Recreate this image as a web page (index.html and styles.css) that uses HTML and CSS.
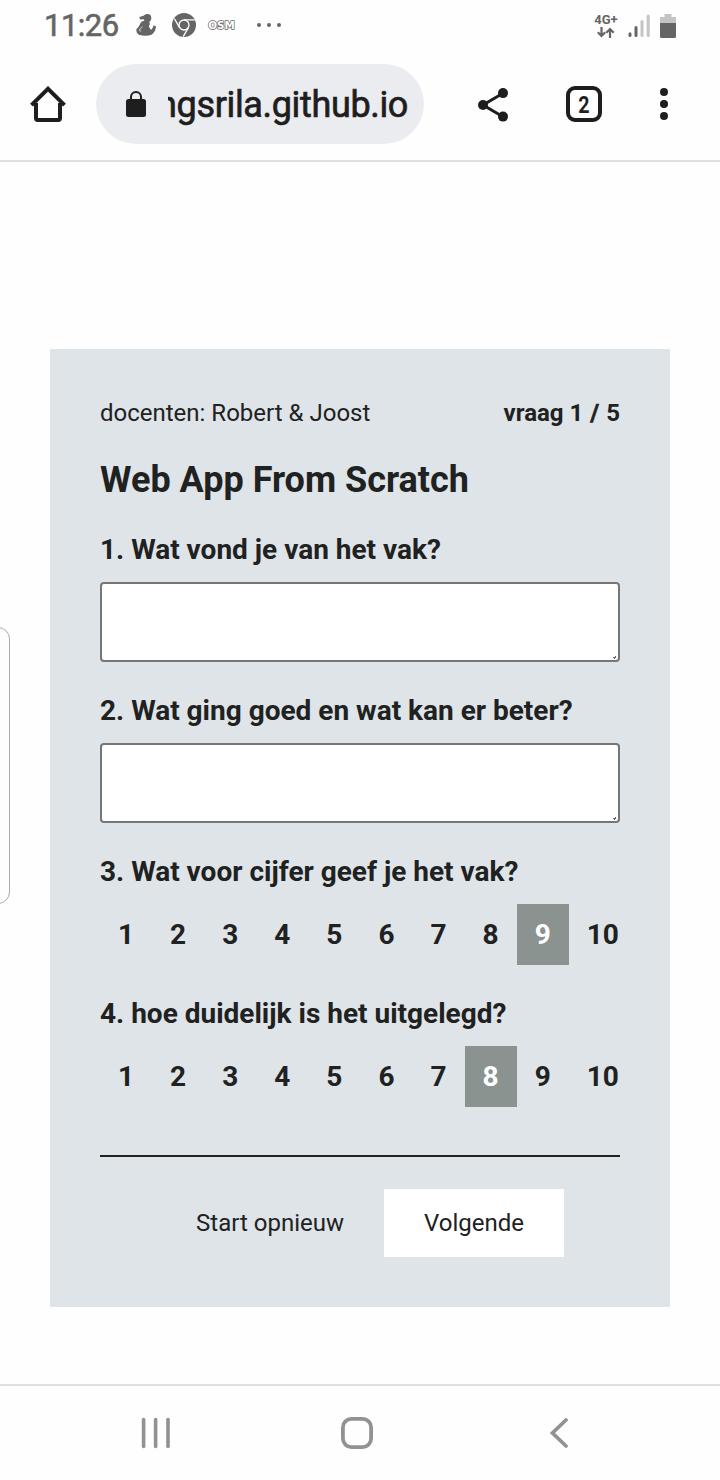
FILE: index.html
```html
<!DOCTYPE html>
<html lang="nl">
<head>
<meta charset="utf-8">
<title>Web App From Scratch</title>
<link rel="stylesheet" href="styles.css">
</head>
<body>
<div class="screen">
  <header class="status">
    <div class="status-left">
      <span class="clock">11:26</span>
      <svg class="ic-figure" width="20" height="24" viewBox="0 0 20 24" fill="#656565"><circle cx="11.4" cy="5" r="3.9"/><path d="M10.5 1.8 3.4 4 4 6.6 9 6Z"/><path d="M7.5 8H13.2L13.8 11 12.8 13.5 15 17Q17 15.5 17.5 12.6L20 13.3Q19.6 18.8 16 21.4Q10 24 2.8 21.8L.8 19.8 .2 16.6Q3 13.8 4.6 10Q5.5 8.2 7.5 8Z"/><path d="M6.4 13.4 3.2 17.2 5.2 18.4" fill="none" stroke="#fefefe" stroke-width=".7"/></svg>
      <svg class="ic-chrome" width="24" height="24" viewBox="0 0 24 24"><circle cx="12" cy="12" r="12" fill="#656565"/><circle cx="12" cy="12" r="5" fill="none" stroke="#fefefe" stroke-width="1.3"/><path d="M12 6.8H22.8M7.6 14.6 2.3 5.5M16.4 14.6 11.2 23.6" fill="none" stroke="#fefefe" stroke-width="1.3"/></svg>
      <svg class="ic-osm" width="30" height="14" viewBox="0 0 30 14"><text x="1.3" y="11.3" textLength="26.5" lengthAdjust="spacingAndGlyphs">OSM</text></svg>
      <svg class="ic-more" width="26" height="6" viewBox="0 0 26 6" fill="#656565"><circle cx="3" cy="3" r="2"/><circle cx="13" cy="3" r="2"/><circle cx="23" cy="3" r="2"/></svg>
    </div>
    <div class="status-right">
      <div class="network"><span class="net-label">4G+</span>
        <svg width="18" height="11" viewBox="0 0 18 11" fill="none" stroke="#656565" stroke-width="2.2"><path d="M4.5 0V9M.8 5.3 4.5 9 8.2 5.3M13 11V2M9.3 5.7 13 2 16.7 5.7"/></svg>
      </div>
      <svg class="ic-signal" width="22" height="24" viewBox="0 0 22 24" stroke-width="3" stroke-linecap="round"><path d="M2 19.7V21.5M8 13.5V21.5" stroke="#656565"/><path d="M14 7.5V21.5M20.2 2V21.5" stroke="#c4c4c4"/></svg>
      <svg class="ic-battery" width="16" height="24" viewBox="0 0 16 24"><path d="M4.5 0H11.5V3H16V9H0V3H4.5Z" fill="#c4c4c4"/><path d="M0 9H16V22.5Q16 24 14.5 24H1.5Q0 24 0 22.5Z" fill="#656565"/></svg>
    </div>
  </header>
  <div class="toolbar">
    <svg class="ic-home" width="36" height="36" viewBox="0 0 36 36" fill="none" stroke="#1e1e1f" stroke-width="4" stroke-linejoin="round"><path d="M6 17V32.3Q6 34 7.7 34H28.3Q30 34 30 32.3V17"/><path d="M1.5 19.2 18 2.8 34.5 19.2" stroke-linejoin="miter"/></svg>
    <div class="address">
      <svg width="20" height="26" viewBox="0 0 20 26"><rect y="8" width="20" height="18" rx="2.5" fill="#1e1e1f"/><path d="M5 9V6A5 5 0 0 1 15 6V9" fill="none" stroke="#1e1e1f" stroke-width="2"/></svg>
      <div class="url"><span>ngsrila.github.io</span></div>
    </div>
    <svg class="ic-share" width="30" height="34" viewBox="0 0 30 34" fill="#1e1e1f"><path d="M25 5.3 5 17 25 28.7" fill="none" stroke="#1e1e1f" stroke-width="3"/><circle cx="25" cy="5.1" r="5"/><circle cx="5" cy="17" r="5"/><circle cx="25" cy="28.6" r="5"/></svg>
    <div class="tabs"><span>2</span></div>
    <svg class="ic-menu" width="8" height="32" viewBox="0 0 8 32" fill="#1e1e1f"><circle cx="4" cy="4" r="4"/><circle cx="4" cy="16" r="4"/><circle cx="4" cy="28" r="4"/></svg>
  </div>
  <main class="page">
    <div class="edge-panel"></div>
    <form class="card">
      <div class="meta"><span>docenten: Robert &amp; Joost</span><b>vraag 1 <span class="slash">/</span> 5</b></div>
      <h1>Web App From Scratch</h1>
      <section>
        <h2>1. Wat vond je van het vak?</h2>
        <div class="area"><svg width="3" height="3" viewBox="0 0 3 3"><path d="M0 1H2V0H3V2H2V3H1V2H0Z" fill="#666"/></svg></div>
      </section>
      <section>
        <h2>2. Wat ging goed en wat kan er beter?</h2>
        <div class="area"><svg width="3" height="3" viewBox="0 0 3 3"><path d="M0 1H2V0H3V2H2V3H1V2H0Z" fill="#666"/></svg></div>
      </section>
      <section>
        <h2>3. Wat voor cijfer geef je het vak?</h2>
        <div class="scale"><span>1</span><span>2</span><span>3</span><span>4</span><span>5</span><span>6</span><span>7</span><span>8</span><span class="on">9</span><span>10</span></div>
      </section>
      <section>
        <h2>4. hoe duidelijk is het uitgelegd?</h2>
        <div class="scale"><span>1</span><span>2</span><span>3</span><span>4</span><span>5</span><span>6</span><span>7</span><span class="on">8</span><span>9</span><span>10</span></div>
      </section>
      <div class="actions"><span class="btn">Start opnieuw</span><span class="btn primary">Volgende</span></div>
    </form>
  </main>
  <nav class="navbar">
    <svg class="ic-recent" width="30" height="32" viewBox="0 0 30 32" fill="#929292"><rect x=".8" y=".8" width="3.6" height="30.4" rx="1.8"/><rect x="12.8" y=".8" width="3.6" height="30.4" rx="1.8"/><rect x="25.2" y=".8" width="3.6" height="30.4" rx="1.8"/></svg>
    <svg class="ic-square" width="32" height="32" viewBox="0 0 32 32" fill="none" stroke="#929292" stroke-width="3.8"><rect x="1.9" y="1.9" width="28.2" height="28.2" rx="8.5"/></svg>
    <svg class="ic-back" width="18" height="30" viewBox="0 0 18 30" fill="none" stroke="#929292" stroke-width="3.7" stroke-linecap="round"><path d="M16 2 2.5 15 16 28"/></svg>
  </nav>
</div>
</body>
</html>
```

FILE: styles.css
```css
body { margin: 0; font-family: Roboto, sans-serif; color: #202121; background: #fefefe; }
svg { display: block; flex: none; }
.screen { width: 720px; height: 1480px; display: flex; flex-direction: column; overflow: hidden; }
.status { height: 50px; display: flex; justify-content: space-between; align-items: center; padding: 0 44px; box-sizing: border-box; color: #656565; }
.status-left, .status-right { display: flex; align-items: center; }
.clock { font-size: 31px; line-height: 36px; width: 92px; padding-top: 2px; letter-spacing: -.5px; -webkit-text-stroke: .6px #656565; }
.ic-chrome { margin-left: 16px; }
.ic-osm { margin-left: 11px; }
.ic-osm text { font: 900 11px "DejaVu Sans", sans-serif; fill: #fff; stroke: #656565; stroke-width: 1.5px; paint-order: stroke; }
.ic-more { margin-left: 19px; }
.network { width: 24px; height: 26px; margin-right: 10px; display: flex; flex-direction: column; align-items: center; }
.net-label { font-size: 13px; font-weight: 700; line-height: 14px; margin-top: 1px; }
.ic-signal { margin-right: 10px; margin-top: 2px; }
.ic-battery { margin-top: 1px; }
.toolbar { height: 112px; box-sizing: border-box; border-bottom: 2px solid #e0e0e0; padding: 14px 30px 16px; display: flex; align-items: center; }
.address { width: 328px; height: 80px; margin-left: 30px; border-radius: 40px; background: #ebecf0; display: flex; align-items: center; box-sizing: border-box; padding: 0 16px 0 30px; gap: 22px; color: #1e1e1f; }
.url { width: 240px; display: flex; justify-content: flex-end; overflow: hidden; font-size: 36px; line-height: 48px; padding-top: 2px; white-space: nowrap; letter-spacing: -.35px; -webkit-text-stroke: .7px #1e1e1f; }
.ic-share { margin-left: 54px; margin-top: 1px; }
.tabs { margin-left: 58px; width: 36px; height: 36px; box-sizing: border-box; border: 4px solid #1e1e1f; border-radius: 9px; display: flex; justify-content: center; align-items: center; font-size: 24px; line-height: 28px; font-weight: 700; color: #1e1e1f; }
.tabs span { transform: scaleX(.82); padding-top: 1px; }
.ic-menu { margin-left: 58px; }
.page { flex: 1; position: relative; padding: 187px 50px 0; }
.edge-panel { position: absolute; left: -20px; top: 465px; width: 30px; height: 277px; box-sizing: border-box; border: 1px solid #aaa; border-radius: 12px; }
.card { background: #dfe4e8; height: 958px; box-sizing: border-box; padding: 50px; }
.meta { display: flex; justify-content: space-between; font-size: 24px; line-height: 28px; }
.slash { display: inline-block; width: 11px; text-align: center; -webkit-text-stroke: .6px #202121; }
h1 { margin: 32px 0; font-size: 36px; line-height: 42px; }
h2 { margin: 0 0 16px; font-size: 28px; line-height: 33px; white-space: nowrap; }
section { margin-bottom: 32px; }
.area { height: 80px; box-sizing: border-box; background: #fff; border: 2px solid #767676; border-radius: 4px; display: flex; justify-content: flex-end; align-items: flex-end; padding: 1px 2px; }
.scale { display: flex; font-size: 28px; font-weight: 700; line-height: 33px; }
.scale span { padding: 14px 18px; }
.scale .on { background: #8b9391; color: #fff; }
.actions { margin-top: 48px; border-top: 2px solid #202121; padding-top: 32px; display: flex; justify-content: center; }
.btn { padding: 20px 40px; font-size: 24px; line-height: 28px; white-space: nowrap; }
.primary { background: #fff; }
.navbar { height: 96px; box-sizing: border-box; border-top: 2px solid #e0e0e0; display: flex; align-items: center; padding-left: 141px; }
.ic-square { margin-left: 170px; }
.ic-back { margin-left: 177px; }
```
